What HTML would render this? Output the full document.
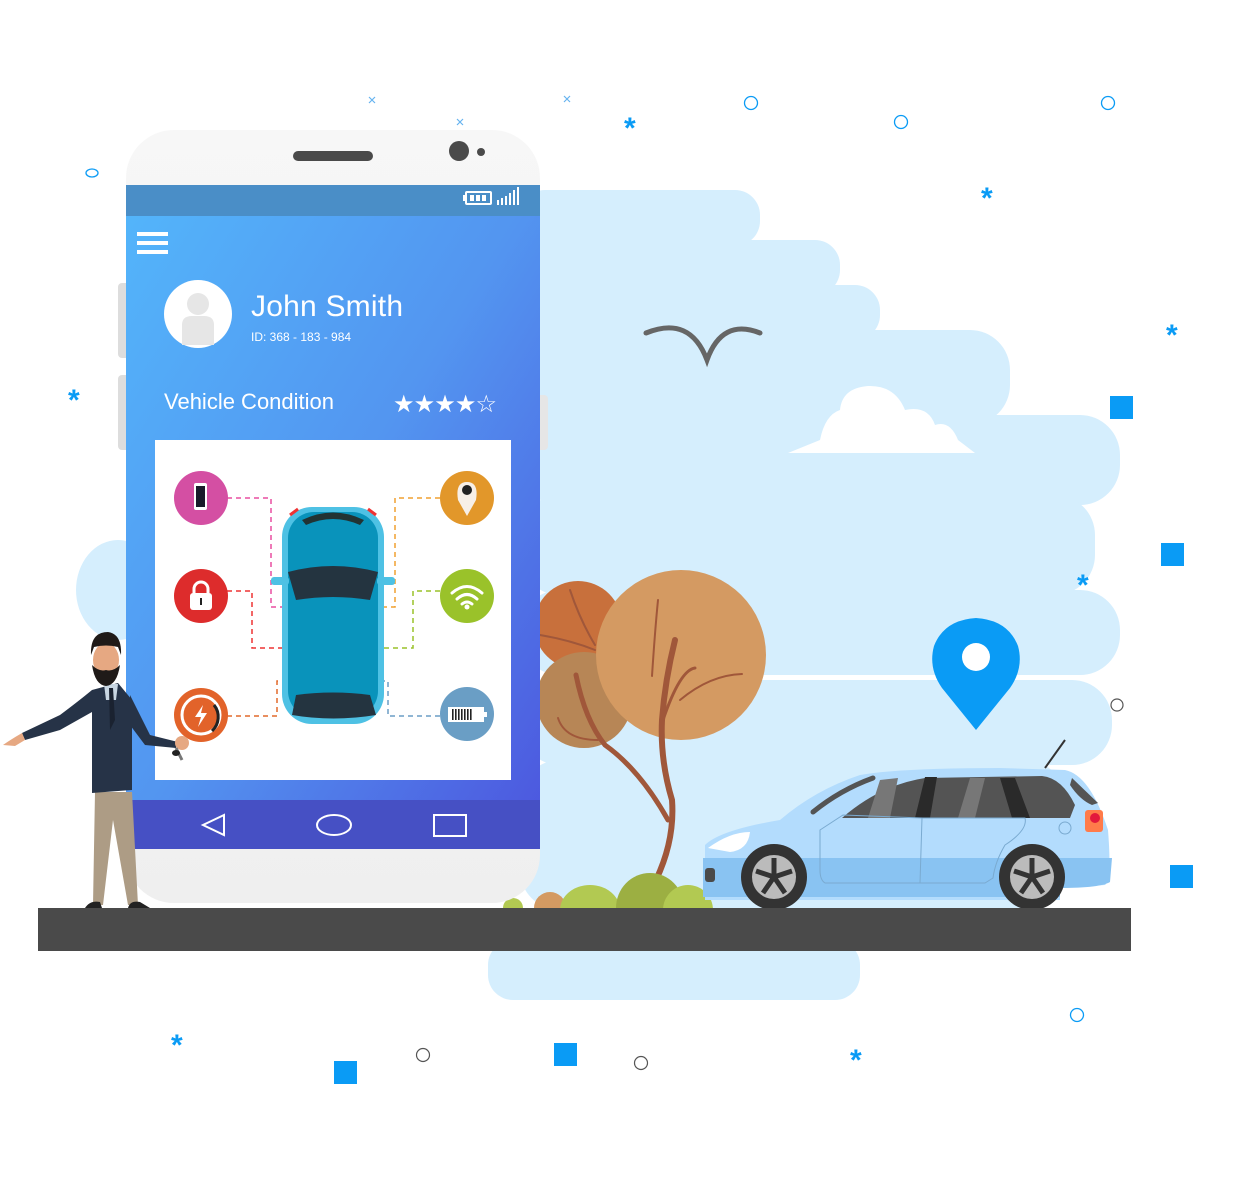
<!DOCTYPE html>
<html><head><meta charset="utf-8"><style>
html,body{margin:0;padding:0;background:#fff;}
svg{display:block;}
text{font-family:"Liberation Sans",sans-serif;}
</style></head><body>
<svg width="1249" height="1203" viewBox="0 0 1249 1203" xmlns="http://www.w3.org/2000/svg">
<defs>
<linearGradient id="scr" x1="0" y1="0" x2="1" y2="1">
<stop offset="0" stop-color="#53b6fb"/><stop offset="0.5" stop-color="#5395f0"/><stop offset="1" stop-color="#4c55de"/>
</linearGradient>
<linearGradient id="frame" x1="0" y1="0" x2="0" y2="1">
<stop offset="0" stop-color="#f7f7f7"/><stop offset="1" stop-color="#efefef"/>
</linearGradient>
</defs>
<g fill="#d5eefd">
<rect x="520" y="190" width="240" height="56" rx="25"/>
<rect x="520" y="240" width="320" height="55" rx="25"/>
<rect x="520" y="285" width="360" height="55" rx="25"/>
<rect x="520" y="330" width="490" height="95" rx="40"/>
<rect x="520" y="415" width="600" height="90" rx="40"/>
<rect x="520" y="495" width="575" height="100" rx="40"/>
<rect x="520" y="590" width="600" height="85" rx="40"/>
<rect x="520" y="680" width="592" height="85" rx="40"/>
<rect x="520" y="760" width="545" height="150" rx="40"/>
<rect x="488" y="940" width="372" height="60" rx="25"/>
<ellipse cx="118" cy="590" rx="42" ry="50"/>
</g>
<path d="M788 453 L975 453 L958 440 Q950 420 935 425 Q928 405 905 410 Q895 385 868 386 Q842 388 840 410 Q825 415 820 440 Z" fill="#fff"/>
<path d="M646 333 Q690 315 707 360 Q722 318 760 333" fill="none" stroke="#666" stroke-width="5" stroke-linecap="round"/>
<g fill="#0a9bf5">
<rect x="1110" y="396" width="23" height="23"/>
<rect x="1161" y="543" width="23" height="23"/>
<rect x="1170" y="865" width="23" height="23"/>
<rect x="334" y="1061" width="23" height="23"/>
<rect x="554" y="1043" width="23" height="23"/>
</g>
<g fill="#0a9bf5" font-size="30" font-family="Liberation Sans" font-weight="bold">
<text x="624" y="138">*</text><text x="981" y="208">*</text><text x="1166" y="345">*</text>
<text x="68" y="410">*</text><text x="1077" y="595">*</text><text x="171" y="1055">*</text><text x="850" y="1070">*</text>
</g>
<g fill="none" stroke="#0a9bf5" stroke-width="1.3">
<circle cx="751" cy="103" r="6.5"/><circle cx="901" cy="122" r="6.5"/><circle cx="1108" cy="103" r="6.5"/>
<ellipse cx="92" cy="173" rx="6" ry="4"/><circle cx="1077" cy="1015" r="6.5"/>
</g>
<g fill="none" stroke="#555" stroke-width="1.2">
<circle cx="423" cy="1055" r="6.5"/><circle cx="641" cy="1063" r="6.5"/><circle cx="1117" cy="705" r="6"/>
</g>
<g stroke="#66b3f0" stroke-width="1.2">
<path d="M369 97l6 6M375 97l-6 6M457 119l6 6M463 119l-6 6M564 96l6 6M570 96l-6 6"/>
</g>
<circle cx="578" cy="625" r="44" fill="#c8703c"/>
<circle cx="584" cy="700" r="48" fill="#b78656"/>
<circle cx="681" cy="655" r="85" fill="#d49a62"/>
<g fill="none" stroke="#a0573a" stroke-linecap="round">
<path d="M656 880 Q675 840 672 800 Q660 760 662 720 Q665 680 675 640" stroke-width="6"/>
<path d="M668 820 Q640 770 605 745 Q585 720 576 675" stroke-width="5"/>
<path d="M663 720 Q680 670 695 668" stroke-width="3"/>
<path d="M680 700 Q710 675 742 674" stroke-width="2"/>
<path d="M652 676 Q655 630 658 600" stroke-width="2"/>
<path d="M540 635 Q570 640 595 650" stroke-width="2"/>
<path d="M570 590 Q580 620 595 645" stroke-width="2"/>
<path d="M598 740 Q565 740 558 718" stroke-width="2"/>
</g>
<circle cx="550" cy="908" r="16" fill="#d49a62"/>
<ellipse cx="590" cy="910" rx="30" ry="25" fill="#b2c952"/>
<ellipse cx="650" cy="908" rx="34" ry="35" fill="#9caf42"/>
<ellipse cx="688" cy="910" rx="25" ry="25" fill="#b2c952"/>
<circle cx="513" cy="908" r="10" fill="#b2c952"/>
<path d="M976 730 L942 688 Q928 668 934 646 Q944 620 976 618 Q1008 620 1018 646 Q1024 668 1010 688 Z" fill="#0a9bf5"/>
<circle cx="976" cy="657" r="14" fill="#fff"/>
<g>
<path d="M1045 768 L1065 740" stroke="#333" stroke-width="2"/>
<path d="M705 900 L705 845 Q720 830 780 820 Q815 790 860 775 Q900 768 1000 768 L1065 770 Q1090 775 1108 830 Q1112 880 1105 885 L1060 888 L1060 900 Z" fill="#b3dcfd"/>
<path d="M703 858 L1112 858 L1110 882 Q1100 888 1060 888 L1060 897 L703 897 Z" fill="#89c3f2"/>
<path d="M842 818 Q880 785 925 778 L1042 776 Q1062 778 1075 805 L1070 818 Z" fill="#545454"/>
<path d="M868 818 L880 780 L898 778 L890 818Z M958 818 L970 778 L985 778 L975 818Z" fill="#777"/>
<path d="M915 818 L925 777 L937 777 L930 818Z M1000 778 L1015 778 L1030 818 L1012 818 Z" fill="#2a2a2a"/>
<path d="M813 812 Q840 790 873 778" stroke="#545454" stroke-width="5" stroke-linecap="round" fill="none"/>
<path d="M1072 778 L1098 803 L1092 805 Q1080 800 1070 785 Z" fill="#545454"/>
<path d="M708 848 Q730 832 750 832 Q748 850 730 852 Z" fill="#fff"/>
<rect x="1085" y="810" width="18" height="22" rx="3" fill="#ff7b4a"/>
<circle cx="1095" cy="818" r="5" fill="#e3193c"/>
<rect x="705" y="868" width="10" height="14" rx="3" fill="#4a4a4a"/>
<circle cx="1065" cy="828" r="6" fill="none" stroke="#7aaad0"/>
<path d="M820 830 L843 815 L922 818 L920 883 L825 883 Q820 880 820 870 Z M922 818 L1025 818 Q1028 830 1005 845 Q995 862 993 878 L985 883 L920 883" fill="none" stroke="#7aaad0" stroke-width="1"/>
<circle cx="774" cy="877" r="33" fill="#333"/><circle cx="774" cy="877" r="22" fill="#bbb"/>
<circle cx="1032" cy="877" r="33" fill="#333"/><circle cx="1032" cy="877" r="22" fill="#bbb"/>
<g stroke="#333" stroke-width="5"><path d="M774 877 L774 858 M774 877 L792 871 M774 877 L785 893 M774 877 L763 893 M774 877 L756 871"/>
<path d="M1032 877 L1032 858 M1032 877 L1050 871 M1032 877 L1043 893 M1032 877 L1021 893 M1032 877 L1014 871"/></g>
</g>
<rect x="38" y="908" width="1093" height="43" fill="#4a4a4a"/>
<rect x="118" y="283" width="12" height="75" rx="4" fill="#ddd"/>
<rect x="118" y="375" width="12" height="75" rx="4" fill="#ddd"/>
<rect x="536" y="395" width="12" height="55" rx="4" fill="#e6e6e6"/>
<rect x="126" y="130" width="414" height="773" rx="48" fill="url(#frame)"/>
<rect x="126" y="185" width="414" height="664" fill="url(#scr)"/>
<rect x="126" y="185" width="414" height="31" fill="#4a8ec7"/>
<rect x="126" y="800" width="414" height="49" fill="#4650c4"/>
<rect x="293" y="151" width="80" height="10" rx="5" fill="#4a4a4a"/>
<circle cx="459" cy="151" r="10" fill="#4a4a4a"/><circle cx="481" cy="152" r="4" fill="#4a4a4a"/>
<g fill="#fff"><rect x="466" y="192" width="25" height="12" rx="1" fill="none" stroke="#fff" stroke-width="2"/><rect x="463" y="195" width="2" height="6"/>
<rect x="470" y="195" width="4" height="6"/><rect x="476" y="195" width="4" height="6"/><rect x="482" y="195" width="4" height="6"/>
<rect x="497" y="200" width="2" height="5"/><rect x="501" y="198" width="2" height="7"/><rect x="505" y="196" width="2" height="9"/><rect x="509" y="193" width="2" height="12"/><rect x="513" y="190" width="2" height="15"/><rect x="517" y="187" width="2" height="18"/>
<rect x="137" y="232" width="31" height="4"/><rect x="137" y="241" width="31" height="4"/><rect x="137" y="250" width="31" height="4"/>
</g>
<circle cx="198" cy="314" r="34" fill="#fff"/>
<circle cx="198" cy="304" r="11" fill="#e6e6e6"/>
<path d="M182 345 L182 325 Q182 316 192 316 L204 316 Q214 316 214 325 L214 345 Z" fill="#e6e6e6"/>
<text x="251" y="316" fill="#fff" font-size="30" textLength="152">John Smith</text>
<text x="251" y="341" fill="#fff" font-size="12">ID: 368 - 183 - 984</text>
<text x="164" y="409" fill="#fff" font-size="22">Vehicle Condition</text>
<text x="393" y="412" fill="#fff" font-size="24" textLength="104">★★★★☆</text>
<rect x="155" y="440" width="356" height="340" fill="#fff"/>
<g fill="none" stroke-width="1.5" stroke-dasharray="5 4">
<path d="M227 498 H271 V607 H312" stroke="#e84ea0"/>
<path d="M227 591 H252 V648 H312" stroke="#e33"/>
<path d="M227 716 H277 V681 H310" stroke="#e26a2c"/>
<path d="M440 498 H395 V607 H355" stroke="#f0a030"/>
<path d="M440 591 H413 V648 H355" stroke="#9ac22a"/>
<path d="M440 716 H388 V681 H355" stroke="#6b9ec5"/>
</g>
<rect x="282" y="507" width="102" height="217" rx="30" fill="#4ec1e4"/>
<rect x="288" y="512" width="90" height="205" rx="26" fill="#0993bb"/>
<path d="M302 520 Q333 505 364 520 L360 525 Q333 513 306 525Z" fill="#233"/>
<path d="M288 572 Q333 560 378 572 L370 600 Q333 594 296 600Z" fill="#243440"/>
<path d="M296 695 Q333 690 370 695 L376 715 Q333 722 292 715Z" fill="#243440"/>
<rect x="271" y="577" width="18" height="8" rx="3" fill="#4ec1e4"/><rect x="377" y="577" width="18" height="8" rx="3" fill="#4ec1e4"/>
<path d="M290 515 l8 -6 M376 515 l-8 -6" stroke="#e33" stroke-width="3"/>
<circle cx="201" cy="498" r="27" fill="#d44fa3"/>
<rect x="194" y="483" width="13" height="27" rx="2" fill="#fff"/><rect x="196" y="486" width="9" height="21" fill="#1a1a2a"/>
<circle cx="201" cy="596" r="27" fill="#dd2c2c"/>
<path d="M194 594 v-5 a7 7 0 0 1 14 0 v5" fill="none" stroke="#fff" stroke-width="3"/>
<rect x="190" y="593" width="22" height="17" rx="3" fill="#fff"/><rect x="200" y="598" width="2" height="7" fill="#222"/>
<circle cx="201" cy="715" r="27" fill="#e2632a"/>
<circle cx="201" cy="715" r="19" fill="none" stroke="#fff" stroke-width="3"/>
<path d="M214 705 A19 19 0 0 1 212 731" fill="none" stroke="#222" stroke-width="3"/>
<path d="M203 705 L195 717 L201 717 L198 727 L207 713 L201 713 Z" fill="#fff"/>
<circle cx="467" cy="498" r="27" fill="#e2972a"/>
<path d="M467 516 L458 500 Q455 482 467 482 Q479 482 476 500 Z" fill="#f7efe7"/>
<circle cx="467" cy="490" r="5" fill="#222"/>
<circle cx="467" cy="596" r="27" fill="#9ac22a"/>
<g fill="none" stroke="#fff" stroke-width="3" stroke-linecap="round">
<path d="M452 593 Q467 580 482 593"/><path d="M457 599 Q467 590 477 599"/><path d="M462 604 Q467 600 472 604"/></g>
<circle cx="467" cy="607" r="2.5" fill="#fff"/>
<circle cx="467" cy="714" r="27" fill="#6a9ec5"/>
<rect x="448" y="707" width="36" height="15" fill="#fff"/><rect x="484" y="712" width="3" height="5" fill="#fff"/>
<g fill="#222"><rect x="452" y="709" width="1.6" height="11"/><rect x="455" y="709" width="1.6" height="11"/><rect x="458" y="709" width="1.6" height="11"/><rect x="461" y="709" width="1.6" height="11"/><rect x="464" y="709" width="1.6" height="11"/><rect x="467" y="709" width="1.6" height="11"/><rect x="470" y="709" width="1.6" height="11"/></g>
<g fill="none" stroke="#fff" stroke-width="2">
<path d="M224 815 L203 825 L224 835 Z"/><ellipse cx="334" cy="825" rx="17" ry="10"/><rect x="434" y="815" width="32" height="21"/>
</g>
<g>
<path d="M95 792 L132 792 L138 905 L128 905 L113 820 L103 905 L93 905 Z" fill="#ad9c85"/>
<path d="M85 908 Q90 900 100 902 L102 908Z M128 908 Q130 900 140 902 L150 908Z" fill="#222"/>
<path d="M92 690 Q80 700 60 715 L22 733 L25 740 L60 730 L92 712 Z" fill="#263347"/>
<path d="M130 695 L150 735 L178 742 L176 748 L145 745 L130 725 Z" fill="#263347"/>
<path d="M92 690 L118 683 L132 700 L132 790 L92 793 Z" fill="#263347"/>
<path d="M104 684 L118 684 L116 700 L106 700 Z" fill="#c8d6e2"/>
<path d="M109 688 L113 688 L115 720 L110 730 Z" fill="#1a2230"/>
<path d="M22 733 Q10 740 3 745 L15 746 L25 740 Z" fill="#e6a882"/>
<circle cx="182" cy="743" r="7" fill="#e6a882"/>
<path d="M176 748 L182 760" stroke="#777" stroke-width="3"/>
<ellipse cx="176" cy="753" rx="4" ry="3" fill="#222"/>
<ellipse cx="106" cy="660" rx="13" ry="17" fill="#e6a882"/>
<path d="M92 665 Q95 685 106 686 Q117 685 120 665 Q113 672 106 670 Q99 672 92 665 Z" fill="#1f1a18"/>
<path d="M91 655 Q90 632 108 632 Q122 634 121 655 L118 647 Q106 644 94 647 Z" fill="#1f1a18"/>
</g>
</svg>
</body></html>
